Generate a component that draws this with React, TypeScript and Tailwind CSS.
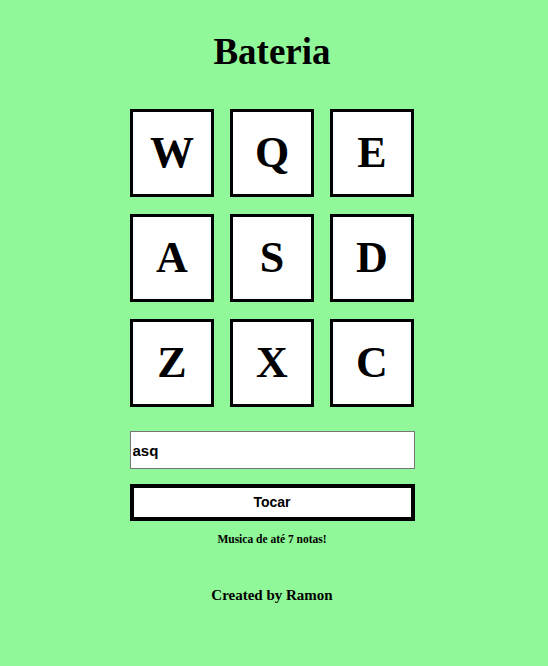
import React from "react";

const keys = ["W", "Q", "E", "A", "S", "D", "Z", "X", "C"];

export default function App() {
  return (
    <div className="min-h-[666px] w-full bg-[#90f898]" style={{ fontFamily: '"Liberation Serif", serif' }}>
      <div className="w-[544px] flex flex-col items-center">
        <h1 className="mt-[30px] text-[37px] leading-[44px] font-bold text-black">Bateria</h1>
        <div className="mt-[35px] grid grid-cols-3 gap-x-[16px] gap-y-[17px]">
          {keys.map((k) => (
            <div
              key={k}
              className="w-[84px] h-[88px] bg-white border-[3px] border-black flex items-center justify-center text-[44px] font-bold text-black"
            >
              {k}
            </div>
          ))}
        </div>
        <input
          className="mt-[24px] w-[285px] h-[38px] bg-white border border-[#767676] px-[2px] text-[15px] font-bold text-black outline-none"
          style={{ fontFamily: '"Liberation Sans", Arial, sans-serif' }}
          defaultValue="asq"
        />
        <button
          className="mt-[15px] w-[285px] h-[37px] bg-white border-[4px] border-black text-[14px] font-bold text-black"
          style={{ fontFamily: '"Liberation Sans", Arial, sans-serif' }}
        >
          Tocar
        </button>
        <p className="mt-[10px] text-[11.5px] font-bold text-black">Musica de até 7 notas!</p>
        <p className="mt-[36px] text-[15px] font-bold text-black">Created by Ramon</p>
      </div>
    </div>
  );
}
